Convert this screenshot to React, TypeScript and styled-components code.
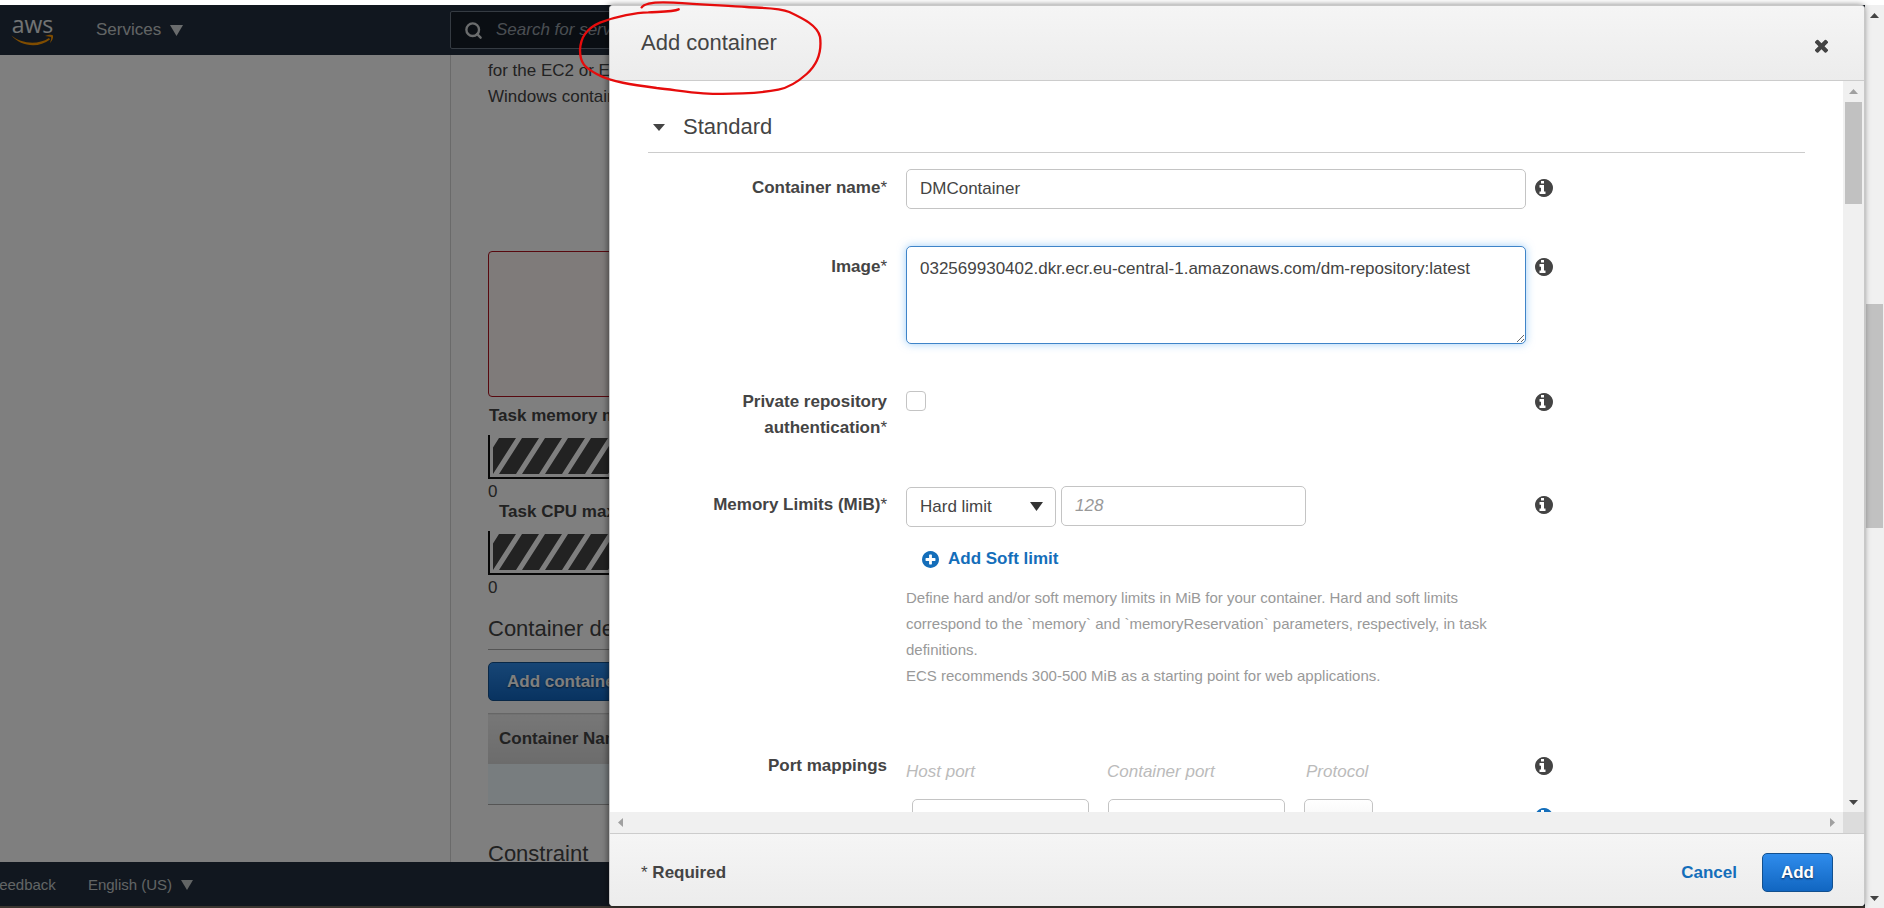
import React, { useEffect, useRef } from 'react';
import styled, { createGlobalStyle, css } from 'styled-components';
import { Search } from 'lucide-react';

const GlobalStyle = createGlobalStyle`
  * { box-sizing: border-box; }
  body {
    margin: 0;
    background: #fff;
    color: #444;
    font: 17px/26px "Liberation Sans", Arial, sans-serif;
  }
  button, input, textarea, select { font: inherit; color: inherit; }
  h1, h2, h3, p { margin: 0; font-weight: 400; }
`;

const Screen = styled.div`
  position: relative;
  display: flex;
  height: 100vh;
  padding-top: 5px;
  overflow: hidden;
`;

const Page = styled.div`
  position: relative;
  display: flex;
  flex-direction: column;
  flex: 1;
  min-width: 0;
  border-bottom: 2px solid #3b3630;
`;

/* Console page behind the dialog */

const TopNav = styled.header`
  display: flex;
  align-items: center;
  flex: none;
  height: 50px;
  padding-left: 11px;
  background: #232f3e;
  color: #d5d9da;
`;

const Logo = styled.a`
  display: flex;
  flex-direction: column;
  width: 43px;
  color: #e4e7e8;
  font: 400 23px/19px "Open Sans", sans-serif;
  text-decoration: none;
  text-align: center;
`;

const Smile = styled.svg`
  display: block;
  width: 43px;
  height: 12px;
`;

const MenuButton = styled.button<{ $small?: boolean }>`
  display: flex;
  align-items: center;
  gap: 9px;
  padding: 0;
  border: 0;
  background: none;
  color: #c5cacb;
  ${(p) => p.$small && css`font-size: 15px;`}
`;

const ServicesSlot = styled.div`
  width: 396px;
  padding-left: 42px;
`;

const SearchBox = styled.label`
  display: flex;
  align-items: center;
  gap: 13px;
  flex: 1;
  height: 38px;
  padding-left: 13px;
  border: 1px solid #6b7785;
  border-radius: 2px;
  background: #151d27;
`;

const SearchInput = styled.input`
  flex: 1;
  min-width: 0;
  padding: 0;
  border: 0;
  outline: 0;
  background: none;
  &::placeholder { color: #959ca4; font-style: italic; opacity: 1; }
`;

const PageBody = styled.div`
  display: flex;
  flex: 1;
  min-height: 0;
  overflow: hidden;
`;

const SideColumn = styled.aside`
  flex: none;
  width: 451px;
  border-right: 1px solid #d5d5d5;
`;

const PageContent = styled.main`
  flex: 1;
  min-width: 0;
  padding: 3px 40px 0 37px;
`;

const Intro = styled.p`
  height: 52px;
  white-space: pre-line;
`;

const ErrorBox = styled.div`
  height: 146px;
  margin: 141px 0 6px;
  border: 1px solid #b0121f;
  border-radius: 4px;
  background: #fff7f5;
`;

const GaugeTitle = styled.h3<{ $inset?: boolean }>`
  margin-bottom: 6px;
  padding-left: ${(p) => (p.$inset ? 11 : 1)}px;
  font-size: 17px;
  font-weight: 700;
`;

const GaugeTrack = styled.div`
  height: 44px;
  padding: 3px 0 0 3px;
  border-left: 2px solid #111;
  border-bottom: 2px solid #111;
`;

const Stripes = styled.svg`
  display: block;
  width: 100%;
  height: 36px;
`;

const GaugeScale = styled.div`
  height: 20px;
`;

const SectionTitle = styled.h2`
  margin: 17px 0 12px;
  padding-bottom: 3px;
  border-bottom: 1px solid #aaa;
  font-size: 22px;
  line-height: 34px;
`;

const ConstraintTitle = styled(SectionTitle)`
  margin-top: 32px;
`;

const PrimaryButton = styled.button`
  height: 39px;
  padding: 0 18px;
  border: 1px solid #12508f;
  border-radius: 5px;
  background: linear-gradient(#2f8cec, #1166c1);
  color: #fff;
  font-weight: 700;
  text-shadow: 0 1px 2px rgba(0, 0, 0, 0.6);
`;

const Table = styled.table`
  width: 100%;
  margin-top: 12px;
  border-collapse: collapse;
  th {
    height: 50px;
    padding: 0 11px;
    border-top: 1px solid #ccc;
    background: linear-gradient(#eee, #d8d8d8);
    text-align: left;
  }
  td {
    height: 41px;
    border-bottom: 1px solid #aaa;
    background: #f1fbff;
  }
`;

const BottomNav = styled.footer`
  display: flex;
  align-items: center;
  flex: none;
  gap: 32px;
  height: 44px;
  padding-top: 2px;
  background: #232f3e;
`;

const Feedback = styled.a`
  margin-left: -10px;
  color: #c5cacb;
  font-size: 15px;
  text-decoration: none;
`;

const Backdrop = styled.div`
  position: absolute;
  inset: 0;
  background: rgba(0, 0, 0, 0.5);
`;

/* Scroll bars */

const VBar = styled.div<{ $wide?: boolean }>`
  display: flex;
  flex-direction: column;
  align-items: center;
  flex: none;
  width: ${(p) => (p.$wide ? 21 : 19)}px;
  padding: 8px 0 7px;
  background: #f0f0f0;
`;

const HBar = styled.div`
  display: flex;
  align-items: center;
  justify-content: space-between;
  flex: 1;
  padding: 0 8px;
`;

const VThumb = styled.div<{ $top: number; $height: number }>`
  width: 17px;
  height: ${(p) => p.$height}px;
  margin: ${(p) => p.$top}px 0 auto;
  background: #c1c1c1;
`;

const ScrollRow = styled.div`
  display: flex;
  flex: none;
  height: 21px;
  background: #f0f0f0;
`;

const Corner = styled.div`
  width: 21px;
  background: #dcdcdc;
`;

const Glyph = styled.svg`
  display: block;
  flex: none;
`;

type Dir = 'up' | 'down' | 'left' | 'right';
const POINTS: Record<Dir, string> = {
  up: '0,10 5,0 10,10',
  down: '0,0 10,0 5,10',
  left: '0,5 10,0 10,10',
  right: '0,0 10,5 0,10',
};

function Triangle({ dir, w, h, color }: { dir: Dir; w: number; h: number; color: string }) {
  return (
    <Glyph width={w} height={h} viewBox="0 0 10 10" preserveAspectRatio="none" aria-hidden="true">
      <polygon points={POINTS[dir]} fill={color} />
    </Glyph>
  );
}

const DISC =
  'M1664 896q0 209-103 385.500t-279.500 279.500-385.500 103-385.500-103-279.500-279.500-103-385.500 103-385.500 279.500-279.500 385.500-103 385.500 103 279.500 279.500 103 385.500z';
const ICONS = {
  info:
    'M1024 1376v-160q0-14-9-23t-23-9h-96v-512q0-14-9-23t-23-9h-320q-14 0-23 9t-9 23v160q0 14 9 23t23 9h96v320h-96q-14 0-23 9t-9 23v160q0 14 9 23t23 9h448q14 0 23-9t9-23zM896 480v-160q0-14-9-23t-23-9h-192q-14 0-23 9t-9 23v160q0 14 9 23t23 9h192q14 0 23-9t9-23z' + DISC,
  plus:
    'M1344 960v-128q0-26-19-45t-45-19h-256v-256q0-26-19-45t-45-19h-128q-26 0-45 19t-19 45v256h-256q-26 0-45 19t-19 45v128q0 26 19 45t45 19h256v256q0 26 19 45t45 19h128q26 0 45-19t19-45v-256h256q26 0 45-19t19-45z' + DISC,
  close:
    'M1490 1322q0 40-28 68l-136 136q-28 28-68 28t-68-28l-294-294-294 294q-28 28-68 28t-68-28l-136-136q-28-28-28-68t28-68l294-294-294-294q-28-28-28-68t28-68l136-136q28-28 68-28t68 28l294 294 294-294q28-28 68-28t68 28l136 136q28 28 28 68t-28 68l-294 294 294 294q28 28 28 68z',
};

function Icon({ name, size }: { name: keyof typeof ICONS; size: number }) {
  return (
    <Glyph width={size} height={size} viewBox="128 128 1536 1536" fill="currentColor" fillRule="evenodd" aria-hidden="true">
      <path d={ICONS[name]} />
    </Glyph>
  );
}

/* Dialog */

const Dialog = styled.section`
  position: absolute;
  top: 5px;
  right: 19px;
  bottom: 2px;
  left: 609px;
  display: flex;
  flex-direction: column;
  border: 1px solid #c8c8c8;
  border-bottom: 0;
  border-radius: 4px;
  background: #fff;
  box-shadow: -1px 0 6px rgba(0, 0, 0, 0.5);
  overflow: hidden;
`;

const DialogHeader = styled.header`
  display: flex;
  align-items: center;
  justify-content: space-between;
  flex: none;
  height: 75px;
  padding: 0 34px 0 31px;
  border-bottom: 1px solid #ccc;
  background: linear-gradient(#f5f5f5, #ececec);
`;

const DialogTitle = styled.h1`
  font-size: 22px;
`;

const IconButton = styled.button`
  display: flex;
  margin-top: 5px;
  padding: 0;
  border: 0;
  background: none;
  color: #444;
`;

const DialogBody = styled.div`
  display: flex;
  flex: 1;
  min-height: 0;
`;

const Form = styled.form`
  flex: 1;
  min-width: 0;
  padding: 29px 38px 0;
  overflow: hidden;
`;

const GroupTitle = styled.h2`
  display: flex;
  align-items: center;
  gap: 18px;
  height: 43px;
  margin-bottom: 16px;
  padding: 0 0 8px 5px;
  border-bottom: 1px solid #ccc;
  font-size: 22px;
`;

const Row = styled.div<{ $space?: number }>`
  display: grid;
  grid-template-columns: 258px minmax(0, 620px) auto;
  justify-content: start;
  margin-bottom: ${(p) => p.$space ?? 45}px;
`;

const LabelCell = styled.div<{ $top: number }>`
  padding: ${(p) => p.$top}px 19px 0 50px;
  text-align: right;
  font-weight: 700;
  span { font-weight: 400; }
`;

const InfoCell = styled.div<{ $top: number }>`
  padding: ${(p) => p.$top + 4}px 0 0 9px;
`;

const InfoButton = styled(IconButton)<{ $blue?: boolean }>`
  margin: 0;
  ${(p) => p.$blue && css`color: #146eba;`}
`;

const box = css`
  height: 40px;
  padding: 0 13px;
  border: 1px solid #c4c4c4;
  border-radius: 5px;
  background: #fff;
  outline: 0;
`;

const TextInput = styled.input<{ $width?: number }>`
  ${box}
  display: block;
  width: ${(p) => (p.$width ? `${p.$width}px` : '100%')};
  &::placeholder { color: #999; font-style: italic; opacity: 1; }
`;

const TextArea = styled.textarea`
  ${box}
  display: block;
  width: 100%;
  height: 98px;
  padding: 9px 13px;
  border-color: #3f84c8;
  box-shadow: 0 0 9px rgba(80, 165, 240, 0.55);
  resize: both;
`;

const CheckBox = styled.input`
  display: block;
  width: 20px;
  height: 20px;
  margin: 2px 0 0;
  appearance: none;
  border: 1px solid #c4c4c4;
  border-radius: 4px;
  background: #fff;
`;

const Inline = styled.div`
  display: flex;
  gap: 5px;
`;

const SelectWrap = styled.div`
  position: relative;
  margin-top: 1px;
  svg { position: absolute; top: 15px; right: 13px; pointer-events: none; }
`;

const Select = styled.select`
  ${box}
  width: 150px;
  appearance: none;
`;

const ProtocolSelect = styled(Select)`
  width: 69px;
  background: linear-gradient(#fff, #eee);
`;

const LinkButton = styled.button`
  display: flex;
  align-items: center;
  gap: 9px;
  margin: 19px 0 13px 16px;
  padding: 0;
  border: 0;
  background: none;
  color: #146eba;
  font-weight: 700;
`;

const Help = styled.p`
  color: #999;
  font-size: 15px;
`;

const Ports = styled.div`
  display: grid;
  grid-template-columns: 201px 199px auto;
  padding-top: 6px;
  color: #bbb;
  font-style: italic;
`;

const PortFields = styled.div`
  display: flex;
  gap: 19px;
  margin-top: 14px;
  padding-left: 6px;
`;

const PortInfo = styled(InfoCell)`
  display: flex;
  flex-direction: column;
  gap: 33px;
`;

const DialogFooter = styled.footer`
  display: flex;
  align-items: center;
  flex: none;
  height: 73px;
  padding: 5px 31px 0 31px;
  border-top: 1px solid #ccc;
  background: linear-gradient(#f5f5f5, #ececec);
  strong { flex: 1; }
  span { font-weight: 400; }
`;

const CancelButton = styled(LinkButton)`
  margin: 0 25px 0 0;
`;

/* Hand-drawn ring round the dialog title */
const Ring = styled.svg`
  position: absolute;
  top: 0;
  left: 560px;
  pointer-events: none;
`;

function Gauge({ id, title, inset }: { id: string; title: string; inset?: boolean }) {
  return (
    <>
      <GaugeTitle $inset={inset}>{title}</GaugeTitle>
      <GaugeTrack>
        <Stripes aria-hidden="true">
          <defs>
            <pattern id={id} width="23" height="36" patternUnits="userSpaceOnUse">
              <rect width="23" height="36" fill="#444" />
              <path d="M0 36 L23 0 L29 0 L6 36 Z M-23 36 L0 0 L6 0 L-17 36 Z" fill="#fff" />
            </pattern>
          </defs>
          <rect width="100%" height="36" fill={`url(#${id})`} />
        </Stripes>
      </GaugeTrack>
      <GaugeScale>0</GaugeScale>
    </>
  );
}

function Info({ blue }: { blue?: boolean }) {
  return (
    <InfoButton type="button" $blue={blue} aria-label="More information">
      <Icon name="info" size={18} />
    </InfoButton>
  );
}

export default function App() {
  const image = useRef<HTMLTextAreaElement>(null);
  useEffect(() => {
    const el = image.current;
    if (el) {
      el.focus();
      el.setSelectionRange(el.value.length, el.value.length);
    }
  }, []);

  return (
    <Screen>
      <GlobalStyle />
      <Page>
        <TopNav>
          <Logo href="#">
            aws
            <Smile viewBox="0 0 43 12" aria-hidden="true">
              <path d="M0.500 1.500 C9 9 26 12 38 4 L39 5.500 C27 15 9 12 0.500 1.500 Z" fill="#ff9900" />
              <path d="M34 2 C38 0.500 41 0.500 42 1.500 C42.500 4 41 7 39 9 C40 6 40.500 4 40 3 C39 2.500 37 2.500 34 2 Z" fill="#ff9900" />
            </Smile>
          </Logo>
          <ServicesSlot>
            <MenuButton>
              Services <Triangle dir="down" w={13} h={11} color="#d5d9da" />
            </MenuButton>
          </ServicesSlot>
          <SearchBox>
            <Search size={19} strokeWidth={3} />
            <SearchInput aria-label="Search" placeholder="Search for services, features, marketplace products, and docs" />
          </SearchBox>
        </TopNav>
        <PageBody>
          <SideColumn />
          <PageContent>
            <Intro>{'for the EC2 or External launch types.\nWindows containers'}</Intro>
            <ErrorBox />
            <Gauge id="memory" title="Task memory maximum" />
            <Gauge id="cpu" title="Task CPU maximum" inset />
            <SectionTitle>Container definitions</SectionTitle>
            <PrimaryButton>Add container</PrimaryButton>
            <Table>
              <thead><tr><th>Container Name</th></tr></thead>
              <tbody><tr><td /></tr></tbody>
            </Table>
            <ConstraintTitle>Constraint</ConstraintTitle>
          </PageContent>
        </PageBody>
        <BottomNav>
          <Feedback href="#">Feedback</Feedback>
          <MenuButton $small>
            English (US) <Triangle dir="down" w={12} h={10} color="#c5cacb" />
          </MenuButton>
        </BottomNav>
        <Backdrop />
      </Page>
      <VBar>
        <Triangle dir="up" w={9} h={5} color="#444" />
        <VThumb $top={286} $height={224} />
        <Triangle dir="down" w={9} h={5} color="#444" />
      </VBar>

      <Dialog role="dialog" aria-labelledby="dialog-title">
        <DialogHeader>
          <DialogTitle id="dialog-title">Add container</DialogTitle>
          <IconButton aria-label="Close"><Icon name="close" size={17} /></IconButton>
        </DialogHeader>
        <DialogBody>
          <Form>
            <GroupTitle>
              <Triangle dir="down" w={12} h={7} color="#444" />
              Standard
            </GroupTitle>
            <Row $space={37}>
              <LabelCell $top={6}><label htmlFor="name">Container name<span>*</span></label></LabelCell>
              <TextInput id="name" defaultValue="DMContainer" />
              <InfoCell $top={6}><Info /></InfoCell>
            </Row>
            <Row>
              <LabelCell $top={8}><label htmlFor="image">Image<span>*</span></label></LabelCell>
              <TextArea
                id="image"
                ref={image}
                spellCheck={false}
                defaultValue="032569930402.dkr.ecr.eu-central-1.amazonaws.com/dm-repository:latest"
              />
              <InfoCell $top={8}><Info /></InfoCell>
            </Row>
            <Row>
              <LabelCell $top={0}><label htmlFor="private">Private repository authentication<span>*</span></label></LabelCell>
              <CheckBox id="private" type="checkbox" />
              <InfoCell $top={0}><Info /></InfoCell>
            </Row>
            <Row $space={64}>
              <LabelCell $top={6}><label htmlFor="memory-limit">Memory Limits (MiB)<span>*</span></label></LabelCell>
              <div>
                <Inline>
                  <SelectWrap>
                    <Select aria-label="Limit type"><option>Hard limit</option></Select>
                    <Triangle dir="down" w={13} h={9} color="#333" />
                  </SelectWrap>
                  <TextInput id="memory-limit" $width={245} placeholder="128" />
                </Inline>
                <LinkButton type="button"><Icon name="plus" size={17} />Add Soft limit</LinkButton>
                <Help>
                  Define hard and/or soft memory limits in MiB for your container. Hard and soft limits
                  correspond to the `memory` and `memoryReservation` parameters, respectively, in task
                  definitions.<br />
                  ECS recommends 300-500 MiB as a starting point for web applications.
                </Help>
              </div>
              <InfoCell $top={6}><Info /></InfoCell>
            </Row>
            <Row>
              <LabelCell $top={0}>Port mappings</LabelCell>
              <div>
                <Ports>
                  <label htmlFor="host-port">Host port</label>
                  <label htmlFor="container-port">Container port</label>
                  <label htmlFor="protocol">Protocol</label>
                </Ports>
                <PortFields>
                  <TextInput id="host-port" $width={177} />
                  <TextInput id="container-port" $width={177} />
                  <ProtocolSelect id="protocol"><option>tcp</option></ProtocolSelect>
                </PortFields>
              </div>
              <PortInfo $top={0}><Info /><Info blue /></PortInfo>
            </Row>
          </Form>
          <VBar $wide>
            <Triangle dir="up" w={9} h={5} color="#a0a0a0" />
            <VThumb $top={8} $height={102} />
            <Triangle dir="down" w={9} h={5} color="#444" />
          </VBar>
        </DialogBody>
        <ScrollRow>
          <HBar>
            <Triangle dir="left" w={5} h={9} color="#a0a0a0" />
            <Triangle dir="right" w={5} h={9} color="#a0a0a0" />
          </HBar>
          <Corner />
        </ScrollRow>
        <DialogFooter>
          <strong><span>*</span> Required</strong>
          <CancelButton type="button">Cancel</CancelButton>
          <PrimaryButton>Add</PrimaryButton>
        </DialogFooter>
      </Dialog>

      <Ring width="270" height="100" viewBox="0 0 810 300" fill="none" stroke="#e60c0c" strokeWidth="7" strokeLinecap="round" aria-hidden="true">
        <path d="M245 22 C255 8 290 5 340 8 C420 14 500 17 560 21 C610 25 655 22 688 36 C730 56 772 76 780 110 C786 155 776 190 740 222 C712 247 685 263 655 269 C600 280 500 284 430 280 C380 277 340 269 290 264 C220 255 150 245 110 222 C75 203 60 190 60 150 C62 110 80 85 120 68 C170 48 230 38 265 37 C300 35 340 36 356 28" />
      </Ring>
    </Screen>
  );
}
